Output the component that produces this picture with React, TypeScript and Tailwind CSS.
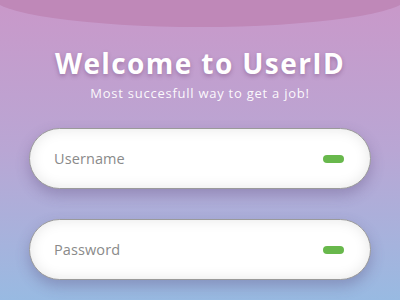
export default function App() {
  const fields = ['Username', 'Password'];
  return (
    <div
      className="relative w-[400px] h-[300px] overflow-hidden bg-gradient-to-b from-[#c998c9] via-[#b9a6d4] to-[#98bae2]"
      style={{ fontFamily: '"Open Sans", "Noto Sans", sans-serif' }}
    >
      {/* top ellipse */}
      <div className="absolute left-[-8px] top-[-34px] w-[416px] h-[61px] rounded-[50%] bg-[#bf88b8]" />

      <div className="relative flex flex-col items-center pt-[46px]">
        <h1 className="text-[28px] leading-[34px] font-bold text-white tracking-[1.4px] [text-shadow:0_2px_4px_rgba(90,40,90,0.35)]">
          Welcome to UserID
        </h1>
        <p className="text-[13px] leading-[16px] text-white/95 tracking-[0.75px] mt-[5px]">
          Most succesfull way to get a job!
        </p>
      </div>

      <div className="relative flex flex-col gap-[30px] px-[29px] mt-[27px]">
        {fields.map((f) => (
          <div
            key={f}
            className="h-[61px] rounded-full border border-[#9a9a9a] bg-white flex items-center justify-between pl-[24px] pr-[26px] shadow-[0_6px_14px_rgba(80,60,110,0.3),inset_0_0_14px_rgba(0,0,0,0.1)]"
          >
            <span className="text-[14.5px] text-[#8a8a8a] tracking-[0.1px]">{f}</span>
            <span className="w-[21px] h-[8px] rounded-full bg-[#68b84c]" />
          </div>
        ))}
      </div>
    </div>
  );
}
